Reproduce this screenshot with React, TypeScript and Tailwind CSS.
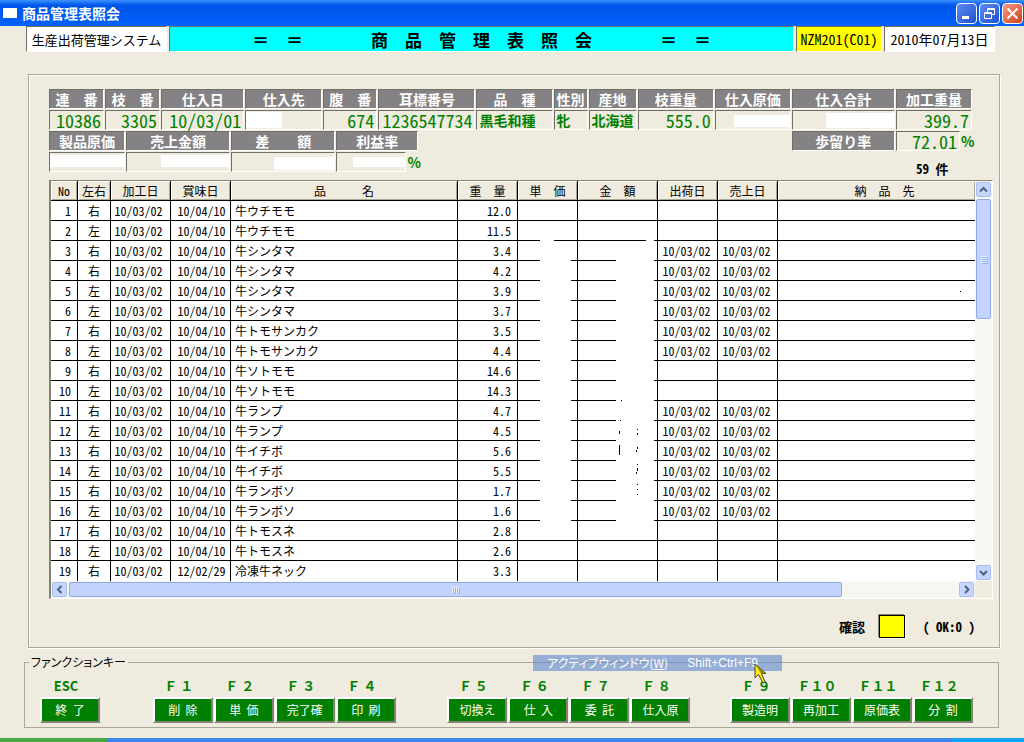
import type { ReactNode } from 'react';

interface Field {
  label: string;
  value?: string;
  kind?: 'number' | 'text';
  mask?: string;
}

interface Item {
  side: '右' | '左';
  made?: string;
  best?: string;
  name: string;
  weight: string;
  shipped?: boolean;
}

const FIELDS: Field[] = [
  { label: '連　番', value: '10386' },
  { label: '枝　番', value: '3305' },
  { label: '仕入日', value: '10/03/01' },
  { label: '仕入先', mask: 'left-0 top-px bottom-px w-9' },
  { label: '腹　番', value: '674' },
  { label: '耳標番号', value: '1236547734' },
  { label: '品　種', value: '黒毛和種', kind: 'text' },
  { label: '性別', value: '牝', kind: 'text' },
  { label: '産地', value: '北海道', kind: 'text' },
  { label: '枝重量', value: '555.0' },
  { label: '仕入原価', mask: 'right-0 top-1 bottom-0.5 w-14' },
  { label: '仕入合計', mask: 'right-0 top-0.5 bottom-px w-17' },
  { label: '加工重量', value: '399.7' },
];

const TOTALS: Field[] = [
  { label: '製品原価', mask: 'inset-x-0 top-0.5 bottom-1' },
  { label: '売上金額', mask: 'right-0 top-0.5 bottom-1 w-17' },
  { label: '差　　額', mask: 'right-0 top-1 bottom-px w-15' },
];

const ITEMS: Item[] = [
  { side: '右', name: '牛ウチモモ', weight: '12.0' },
  { side: '左', name: '牛ウチモモ', weight: '11.5' },
  { side: '右', name: '牛シンタマ', weight: '3.4', shipped: true },
  { side: '右', name: '牛シンタマ', weight: '4.2', shipped: true },
  { side: '左', name: '牛シンタマ', weight: '3.9', shipped: true },
  { side: '左', name: '牛シンタマ', weight: '3.7', shipped: true },
  { side: '右', name: '牛トモサンカク', weight: '3.5', shipped: true },
  { side: '左', name: '牛トモサンカク', weight: '4.4', shipped: true },
  { side: '右', name: '牛ソトモモ', weight: '14.6' },
  { side: '左', name: '牛ソトモモ', weight: '14.3' },
  { side: '右', name: '牛ランプ', weight: '4.7', shipped: true },
  { side: '左', name: '牛ランプ', weight: '4.5', shipped: true },
  { side: '右', name: '牛イチボ', weight: '5.6', shipped: true },
  { side: '左', name: '牛イチボ', weight: '5.5', shipped: true },
  { side: '右', name: '牛ランボソ', weight: '1.7', shipped: true },
  { side: '左', name: '牛ランボソ', weight: '1.6', shipped: true },
  { side: '右', name: '牛トモスネ', weight: '2.8' },
  { side: '左', name: '牛トモスネ', weight: '2.6' },
  { side: '右', best: '12/02/29', name: '冷凍牛ネック', weight: '3.3' },
];

const HEADINGS = ['No', '左右', '加工日', '賞味日', '品　　　名', '重　量', '単　価', '金　額', '出荷日', '売上日', '納　品　先'];

const KEY_GROUPS = [
  [['ESC', '終  了']],
  [['Ｆ １', '削  除'], ['Ｆ ２', '単  価'], ['Ｆ ３', '完了確'], ['Ｆ ４', '印  刷']],
  [['Ｆ ５', '切換え'], ['Ｆ ６', '仕  入'], ['Ｆ ７', '委  託'], ['Ｆ ８', '仕入原']],
  [['Ｆ ９', '製造明'], ['Ｆ１０', '再加工'], ['Ｆ１１', '原価表'], ['Ｆ１２', '分  割']],
];

// what is left of the amounts under the white-out, as [x, y, height] in the cell
const SPECKS: Record<number, number[][]> = {
  9: [[43, 19, 1]],
  10: [[42, 19, 1]],
  11: [[41, 10, 3], [59, 8, 1], [59, 12, 2]],
  12: [[41, 4, 10], [59, 6, 2], [58, 9, 2]],
  13: [[59, 3, 1], [59, 7, 3], [58, 11, 2]],
  14: [[59, 3, 1], [59, 8, 1], [59, 13, 1]],
};

function TitleBar() {
  const button = 'flex size-[21px] items-center justify-center rounded-sm border border-white';
  return (
    <header className="flex h-[26px] items-center bg-linear-to-b from-[#3b92ff] via-[#0055ea] via-20% to-[#0062fa] pr-px pl-[3px]">
      <span className="h-2.5 w-3.5 bg-white" />
      <h1 className="ml-[5px] flex-1 text-sm leading-none font-bold text-white">商品管理表照会</h1>
      <div className="flex gap-0.5">
        <button aria-label="最小化" className={`${button} bg-linear-to-br from-[#5f8cf0] to-[#1c4fd0]`}>
          <svg width="19" height="19"><path d="M5 12h7v3H5z" fill="#fff" /></svg>
        </button>
        <button aria-label="元に戻す" className={`${button} bg-linear-to-br from-[#5f8cf0] to-[#1c4fd0]`}>
          <svg width="19" height="19" fill="none" stroke="#fff">
            <path d="M7.5 8V4.5h7v6H12M7 5.5h8M4.5 8.5h7v6h-7zM4 9.5h8" />
          </svg>
        </button>
        <button aria-label="閉じる" className={`${button} bg-linear-to-br from-[#f09a80] to-[#d03c12]`}>
          <svg width="19" height="19" stroke="#fff" strokeWidth="2">
            <path d="M4.5 4.5l10 10M14.5 4.5l-10 10" />
          </svg>
        </button>
      </div>
    </header>
  );
}

function HeadCell({ children }: { children: ReactNode }) {
  return (
    <dt className="mr-px mb-px flex h-5 items-center justify-center border border-t-[#716f64] border-r-white border-b-white border-l-[#716f64] bg-[#848284] text-sm leading-none font-bold whitespace-nowrap text-white">
      {children}
    </dt>
  );
}

function ValueCell({ field }: { field: Field }) {
  const text =
    field.kind === 'text'
      ? 'justify-start text-sm font-bold'
      : "justify-end text-lg [font-feature-settings:'hwid']";
  return (
    <dd className={`relative mr-px mb-px flex h-5 items-center border border-t-[#716f64] border-r-white border-b-white border-l-[#716f64] px-0.5 leading-none whitespace-nowrap text-[#008000] ${text}`}>
      {field.value}
      {field.mask && <span className={`absolute bg-white ${field.mask}`} />}
    </dd>
  );
}

function Pair({ field }: { field: Field }) {
  return (
    <div>
      <HeadCell>{field.label}</HeadCell>
      <ValueCell field={field} />
    </div>
  );
}

function Percent({ field }: { field: Field }) {
  return (
    <div className="flex">
      <div className="min-w-0 flex-1">
        <ValueCell field={field} />
      </div>
      <span className="w-3 text-sm leading-5 font-bold text-[#008000]">%</span>
    </div>
  );
}

function Summary() {
  return (
    <div className="mr-[26px] ml-5">
      <dl className="grid grid-cols-[56fr_56fr_84fr_78fr_55fr_98fr_77fr_35fr_49fr_77fr_77fr_104fr_77fr]">
        {FIELDS.map((field) => <Pair key={field.label} field={field} />)}
      </dl>
      <dl className="grid h-[42px] grid-cols-[77fr_105fr_105fr_83fr_372fr_104fr_77fr]">
        {TOTALS.map((field) => <Pair key={field.label} field={field} />)}
        <div>
          <HeadCell>利益率</HeadCell>
          <Percent field={{ label: '利益率', mask: 'right-0 top-1 bottom-1 w-13' }} />
        </div>
        <div className="col-start-6">
          <HeadCell>歩留り率</HeadCell>
        </div>
        <div>
          <Percent field={{ label: '歩留り率', value: '72.01' }} />
          <p className="mt-2.5 pl-5 text-[13px] leading-none font-bold [font-feature-settings:'hwid']">59 件</p>
        </div>
      </dl>
    </div>
  );
}

function ArrowButton({ label, path }: { label: string; path: string }) {
  return (
    <button
      aria-label={label}
      className="flex size-[15px] shrink-0 items-center justify-center rounded-xs border border-[#a9bff0] bg-[#c6d5fd]"
    >
      <svg width="11" height="11" fill="none" stroke="#4d6185" strokeWidth="2">
        <path d={path} />
      </svg>
    </button>
  );
}

function ItemTable() {
  const cell = 'border-r border-b border-black group-last:border-b-0';
  const num = "[font-feature-settings:'hwid']";
  return (
    <table className="w-full table-fixed border-separate border-spacing-0 bg-white text-xs leading-none whitespace-nowrap">
      <colgroup>
        <col className="w-[27px]" />
        <col className="w-[33px]" />
        <col className="w-[60px]" />
        <col className="w-[60px]" />
        <col className="w-[227px]" />
        <col className="w-[60px]" />
        <col className="w-[60px]" />
        <col className="w-[80px]" />
        <col className="w-[60px]" />
        <col className="w-[60px]" />
        <col />
      </colgroup>
      <thead>
        <tr className="h-5">
          {HEADINGS.map((h) => (
            <th
              key={h}
              className="border-r border-b border-black bg-[#efebde] p-0 font-normal shadow-[inset_1px_1px_0_#fff,inset_-1px_-1px_0_#aca899] first:[font-feature-settings:'hwid'] last:border-r-0 last:pl-4"
            >
              {h}
            </th>
          ))}
        </tr>
      </thead>
      <tbody>
        {ITEMS.map((item, i) => {
          const masked = i > 1 && i < 16;
          return (
            <tr key={i} className="group h-5">
              <td className={`${cell} ${num} p-0 pr-1.5 text-right`}>{i + 1}</td>
              <td className={`${cell} p-0 text-center`}>{item.side}</td>
              <td className={`${cell} ${num} p-0 pr-1 text-center`}>{item.made ?? '10/03/02'}</td>
              <td className={`${cell} ${num} p-0 pl-0.5 text-center`}>{item.best ?? '10/04/10'}</td>
              <td className={`${cell} p-0 pl-1`}>{item.name}</td>
              <td className={`${cell} ${num} p-0 pr-1.5 text-right`}>{item.weight}</td>
              <td className={`${cell} relative p-0`}>
                {i === 1 && <span className="absolute -bottom-px left-[22px] h-px w-3.5 bg-white" />}
                {masked && <span className="absolute top-0 -bottom-px left-[22px] w-[31px] bg-white" />}
              </td>
              <td className={`${cell} relative p-0`}>
                {i === 1 && <span className="absolute right-[3px] -bottom-px h-px w-2 bg-white" />}
                {masked && <span className="absolute top-0 right-[3px] -bottom-px w-[38px] bg-white" />}
                {SPECKS[i] && (
                  <svg className="absolute top-0 left-0" width="79" height="20">
                    {SPECKS[i].map(([x, y, h]) => (
                      <rect key={`${x}-${y}`} x={x} y={y} width="1" height={h} />
                    ))}
                  </svg>
                )}
              </td>
              <td className={`${cell} ${num} p-0 pr-0.5 text-center`}>{item.shipped && '10/03/02'}</td>
              <td className={`${cell} ${num} p-0 pr-0.5 text-center`}>{item.shipped && '10/03/02'}</td>
              <td className="relative border-b border-black p-0 group-last:border-b-0">
                {i === 4 && <span className="absolute top-2.5 right-3.5 size-px bg-black" />}
              </td>
            </tr>
          );
        })}
      </tbody>
    </table>
  );
}

function Grid() {
  return (
    <div className="mt-[7px] mr-1.5 ml-5 flex border-t border-r border-b border-l-2 border-t-[#848274] border-r-white border-b-white border-l-[#848274]">
      <div className="min-w-0 flex-1">
        <ItemTable />
        <div className="flex h-[17px] items-center gap-0.5 bg-[#f7f6f1] px-px">
          <ArrowButton label="左へ" path="M7.5 2L4 5.5L7.5 9" />
          <div className="flex-1">
            <div className="flex h-[15px] w-[87%] items-center justify-center gap-px rounded-xs border border-[#8fabe8] bg-[#c4d3fd]">
              {[0, 1, 2, 3].map((n) => <span key={n} className="h-1.5 w-px bg-[#eef4fe] shadow-[1px_1px_0_#8cb0f8]" />)}
            </div>
          </div>
          <ArrowButton label="右へ" path="M4 2L7.5 5.5L4 9" />
        </div>
      </div>
      <div className="flex w-[17px] flex-col bg-[#efebde]">
        <div className="flex flex-1 flex-col items-center gap-0.5 bg-[#f9f8f5] py-px">
          <ArrowButton label="上へ" path="M2 7.5L5.5 4L9 7.5" />
          <div className="w-[15px] flex-1">
            <div className="flex h-[33%] flex-col items-center justify-center gap-px rounded-xs border border-[#8fabe8] bg-[#c4d3fd]">
              {[0, 1, 2, 3].map((n) => <span key={n} className="h-px w-1.5 bg-[#eef4fe] shadow-[1px_1px_0_#8cb0f8]" />)}
            </div>
          </div>
          <ArrowButton label="下へ" path="M2 4L5.5 7.5L9 4" />
        </div>
        <div className="h-[17px]" />
      </div>
    </div>
  );
}

function FunctionKeys() {
  return (
    <div className="relative mt-1.5 mr-[25px] ml-6">
      <fieldset className="border border-[#aca899]">
        <legend className="ml-1 px-0.5 text-xs leading-4 [font-feature-settings:'palt']">ファンクションキー</legend>
        <div className="grid grid-cols-[113fr_295fr_283fr_242fr] pt-[9px] pr-[25px] pb-1 pl-[15px]">
          {KEY_GROUPS.map((group, g) => (
            <div key={g} className="flex gap-px">
              {group.map(([key, text]) => (
                <div key={key} className="w-[60px]">
                  <div className="mb-[3px] pr-2 text-center text-[13px] leading-3.5 font-bold whitespace-nowrap text-[#008000]">
                    {key}
                  </div>
                  <button className="h-[26px] w-full border-2 border-t-white border-r-[#848274] border-b-[#848274] border-l-white bg-[#008000] text-xs leading-none whitespace-pre text-white">
                    {text}
                  </button>
                </div>
              ))}
            </div>
          ))}
        </div>
      </fieldset>
      <div className="absolute top-px left-[509px] flex h-4 w-[249px] items-center justify-between bg-[#5b86cf]/60 pr-6 pl-3.5 text-xs leading-none text-white">
        <span className="[font-feature-settings:'palt']">アクティブウィンドウ(<u>W</u>)</span>
        <span className="font-['Liberation_Sans'] text-xs leading-none">Shift+Ctrl+F9</span>
      </div>
      <svg className="absolute top-[9px] left-[730px]" width="14" height="22">
        <path d="M1 1V15L4.500 11.500L9 20L11 19L7.500 10.500H12Z" fill="#ffef00" stroke="#4a4520" />
        <path d="M2 2L11 10.500H7Z" fill="#8c8210" />
      </svg>
    </div>
  );
}

export default function App() {
  const box = 'flex items-center justify-center border border-t-[#716f64] border-l-[#716f64] border-r-white border-b-white whitespace-nowrap';
  return (
    <div className="flex min-h-screen flex-col bg-[#efebde] font-['Noto_Sans_CJK_JP',sans-serif] text-black">
      <TitleBar />
      <div className="mr-[29px] ml-[26px] flex h-[26px] gap-0.5 leading-none">
        <div className={`${box} w-[141px] bg-white text-[13px]`}>生産出荷管理システム</div>
        <div className={`${box} min-w-0 flex-1 bg-[#00ffff] text-[17px] font-bold`}>
          ＝　＝　　　　商　品　管　理　表　照　会　　　　＝　＝
        </div>
        <div className={`${box} w-[86px] bg-[#ffff00] text-sm [font-feature-settings:'hwid']`}>NZM201(C01)</div>
        <div className={`${box} w-[111px] bg-white text-sm [font-feature-settings:'hwid']`}>2010年07月13日</div>
      </div>

      <main className="mt-[22px] mr-6 ml-7 border border-[#aca899] pt-3.5 pb-[9px] shadow-[1px_1px_0_#fff,inset_1px_1px_0_#fff]">
        <Summary />
        <Grid />
        <div className="mt-4 mr-6 flex items-center justify-end text-[13px] leading-none font-bold">
          <label htmlFor="confirm">確認</label>
          <input
            id="confirm"
            className="mr-[18px] ml-3.5 h-[23px] w-[26px] border border-black bg-[#ffff00] shadow-[-1px_-1px_0_#848274,1px_1px_0_#fff] outline-none"
          />
          <span className="whitespace-pre [font-feature-settings:'hwid']">( OK:0 )</span>
        </div>
      </main>

      <FunctionKeys />

      <footer className="mt-auto flex h-1">
        <span className="w-[107px] bg-[#4aa84a]" />
        <span className="flex-1 bg-[#3b87ea]" />
        <span className="w-[73px] bg-[#14a4ee]" />
      </footer>
    </div>
  );
}
